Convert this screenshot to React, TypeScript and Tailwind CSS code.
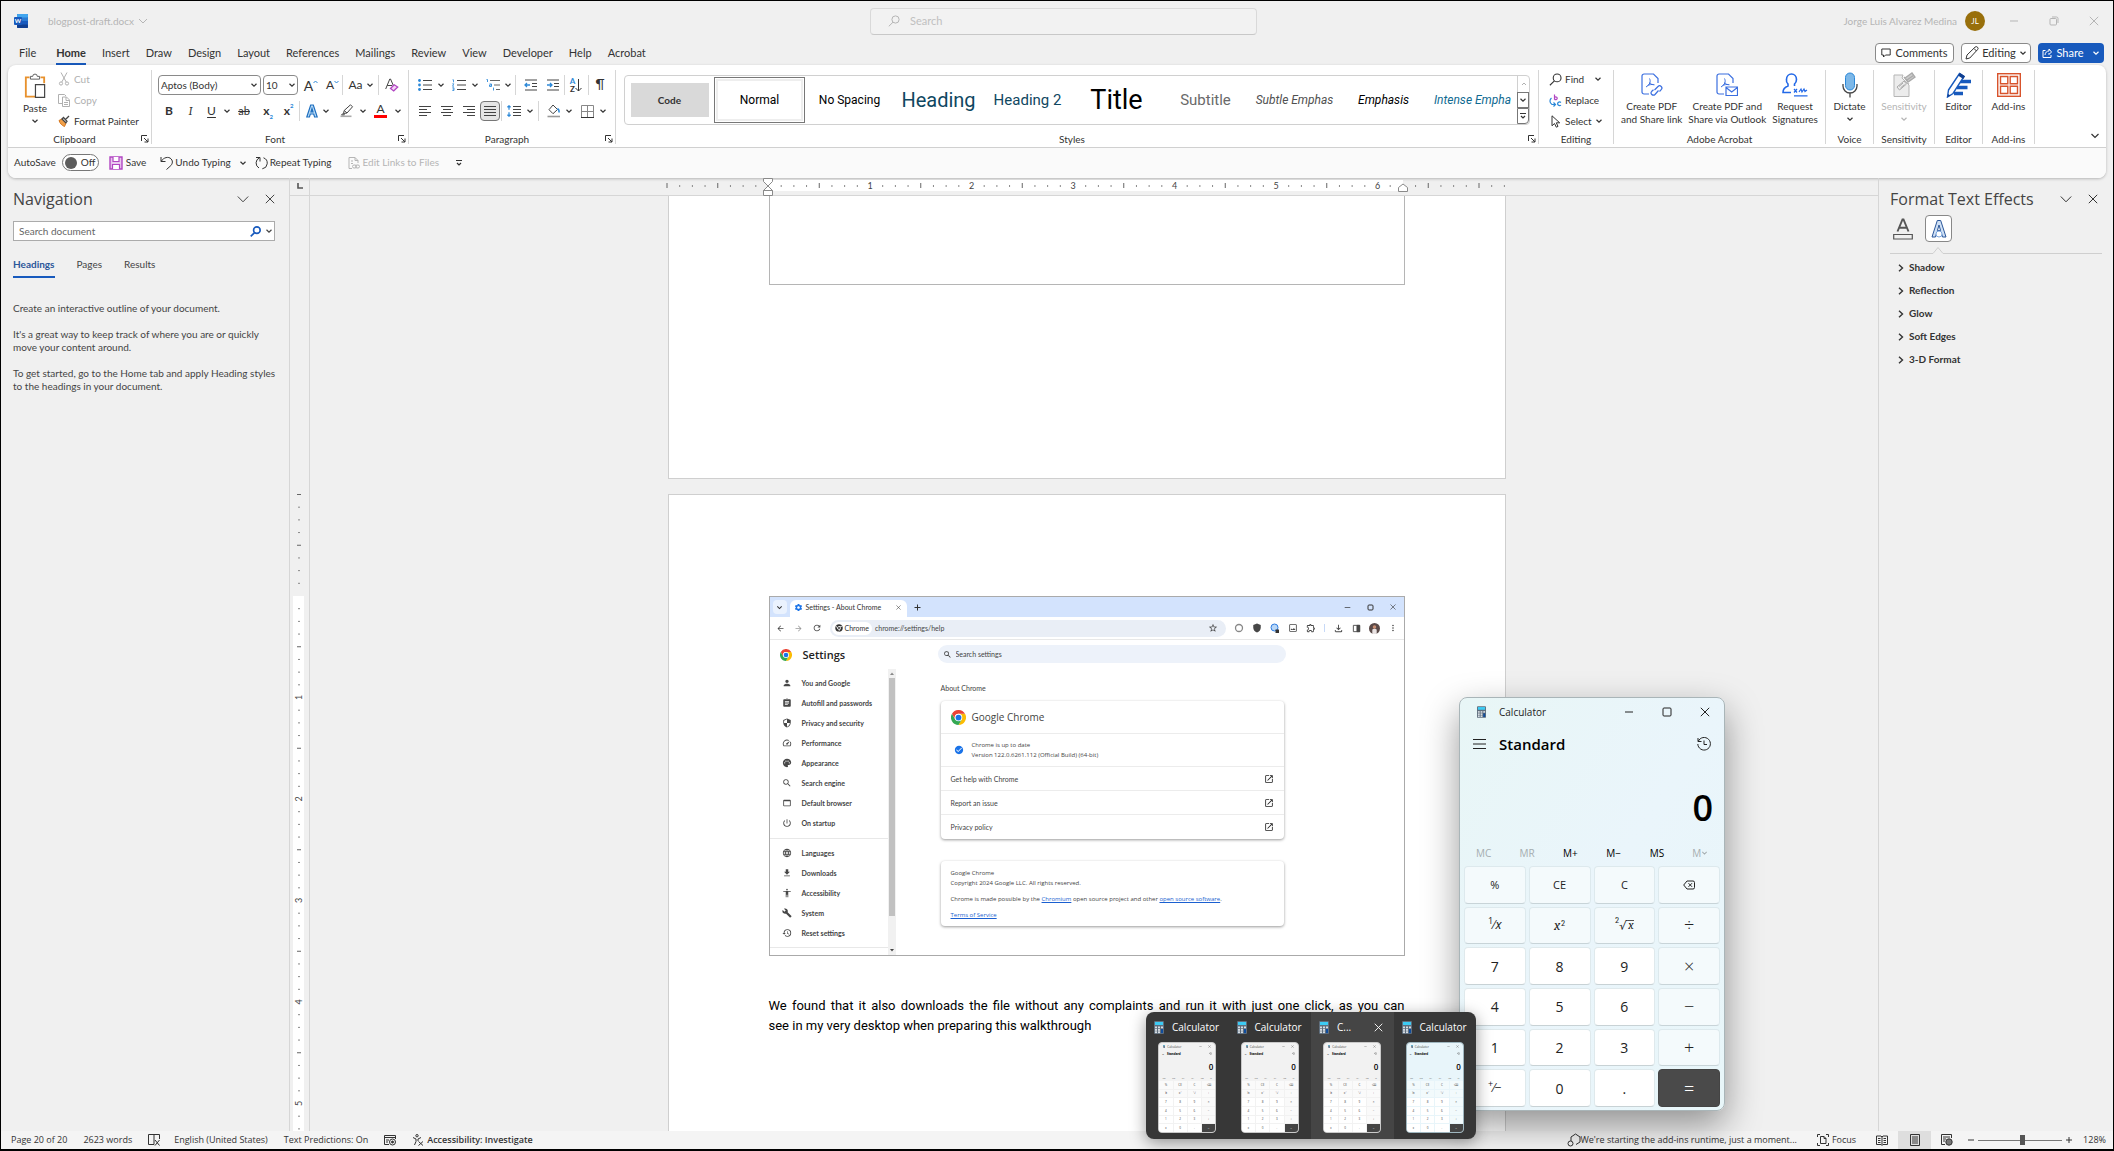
import type { ReactNode } from "react";
import clsx from "clsx";
import {
  MdAccessibility,
  MdArrowBack,
  MdArrowForward,
  MdAssignment,
  MdBuild,
  MdCheckCircle,
  MdFileDownload,
  MdLanguage,
  MdMoreVert,
  MdOpenInNew,
  MdOutlineExtension,
  MdOutlineFileDownload,
  MdOutlineImage,
  MdPalette,
  MdPerson,
  MdPowerSettingsNew,
  MdRefresh,
  MdRestore,
  MdSearch,
  MdSecurity,
  MdSettings,
  MdShield,
  MdSpeed,
  MdStarBorder,
  MdWebAsset,
} from "react-icons/md";

type Kids = { children?: ReactNode; className?: string };

/* ---------- small drawing helpers ---------- */

function Ico({ children, className = "w-4 h-4", box = "0 0 16 16" }: Kids & { box?: string }) {
  return (
    <svg
      viewBox={box}
      className={clsx("shrink-0", className)}
      fill="none"
      stroke="currentColor"
      strokeWidth="1"
      aria-hidden="true"
    >
      {children}
    </svg>
  );
}

function Chevron({ className = "w-2 h-2" }: { className?: string }) {
  return (
    <Ico box="0 0 8 8" className={className}>
      <path d="M1.5 2.8 4 5.2 6.5 2.8" strokeWidth="1.2" />
    </Ico>
  );
}

function WideChevron({ className = "w-3 h-3" }: { className?: string }) {
  return (
    <Ico box="0 0 12 12" className={className}>
      <path d="M.8 3.5 6 8.8l5.200-5.300" />
    </Ico>
  );
}

function Close({ className = "w-[10px] h-[10px]" }: { className?: string }) {
  return (
    <Ico box="0 0 10 10" className={className}>
      <path d="m.8.8 8.400 8.400M9.200.8.8 9.200" />
    </Ico>
  );
}

function Minimize({ className = "w-[10px] h-[10px]" }: { className?: string }) {
  return (
    <Ico box="0 0 10 10" className={className}>
      <path d="M1 5h8" />
    </Ico>
  );
}

function Lens({ className = "w-3 h-3", bold = false }: { className?: string; bold?: boolean }) {
  return (
    <Ico box="0 0 12 12" className={className}>
      <g strokeWidth={bold ? 1.8 : 1}>
        <circle cx="7.500" cy="4.500" r="3.600" />
        <path d="M5 7.200.8 11.300" />
      </g>
    </Ico>
  );
}

function IconBtn({ label, className, children }: Kids & { label: string }) {
  return (
    <button aria-label={label} className={clsx("flex h-5 items-center justify-center", className)}>
      {children}
    </button>
  );
}

function Sep({ className }: { className?: string }) {
  return <span className={clsx("h-5 w-px bg-[#d6d6d6]", className)} />;
}

function CalcIcon({ className = "w-[10px] h-[13px]" }: { className?: string }) {
  return (
    <svg viewBox="0 0 10 13" className={clsx("shrink-0", className)} aria-hidden="true">
      <rect width="10" height="13" rx="1" fill="#5f6e7d" />
      <rect x="1" y="1" width="8" height="3" fill="#3ccbf4" />
      <g fill="#d7dde3">
        <rect x="1" y="5.500" width="2" height="1.800" />
        <rect x="4" y="5.500" width="2" height="1.800" />
        <rect x="7" y="5.500" width="2" height="1.800" />
        <rect x="1" y="8" width="2" height="1.800" />
        <rect x="4" y="8" width="2" height="1.800" />
        <rect x="1" y="10.300" width="2" height="1.800" />
        <rect x="4" y="10.300" width="2" height="1.800" />
      </g>
      <rect x="7" y="8" width="2" height="4.100" fill="#0f4c9c" />
    </svg>
  );
}

function ChromeLogo({ className }: { className?: string }) {
  return (
    <svg viewBox="0 0 24 24" className={clsx("shrink-0", className)} aria-hidden="true">
      <path d="M12 6h10.400A12 12 0 0 1 12 24l5.200-9z" fill="#fbbc04" />
      <path d="M6.800 15 1.600 6A12 12 0 0 0 12 24l5.200-9z" fill="#34a853" />
      <path d="M1.600 6A12 12 0 0 1 22.400 6H12a6 6 0 0 0-5.200 9z" fill="#ea4335" />
      <circle cx="12" cy="12" r="6" fill="#fff" />
      <circle cx="12" cy="12" r="4.600" fill="#1a73e8" />
    </svg>
  );
}

/* ---------- title bar and tabs ---------- */

function TitleBar() {
  return (
    <header className="flex h-[40px] shrink-0 items-center text-[#b5b5b5]">
      <div className="flex flex-1 items-center pl-[13px]">
        <svg viewBox="0 0 14 14" className="h-[14px] w-[14px]" aria-hidden="true">
          <rect x="3" width="11" height="14" rx="1" fill="#185abd" />
          <rect x="3" width="11" height="4" rx="1" fill="#41a5ee" />
          <rect x="3" y="3.500" width="11" height="3.500" fill="#2b7cd3" />
          <rect x="3" y="10.500" width="11" height="3.500" rx="1" fill="#103f91" />
          <rect y="3" width="8" height="8" rx="1" fill="#185abd" />
          <text x="4" y="9.200" fontSize="6" fontWeight="700" fill="#fff" textAnchor="middle">W</text>
        </svg>
        <button className="ml-5 flex items-center gap-1">
          blogpost-draft.docx
          <Ico box="0 0 10 10" className="h-[10px] w-[10px]">
            <path d="M1 3l4 4 4-4" />
          </Ico>
        </button>
      </div>
      <label className="ml-[14px] flex h-[27px] w-[387px] items-center gap-[10px] rounded border border-[#d9d9d9] border-b-[#c8c8c8] bg-[#f2f2f2] px-[17px]">
        <Lens />
        <input
          aria-label="Search"
          placeholder="Search"
          className="flex-1 bg-transparent text-[11px] outline-none placeholder:text-[#c0c0c0]"
        />
      </label>
      <div className="flex flex-1 items-center justify-end pr-[14px]">
        <span>Jorge Luis Alvarez Medina</span>
        <span className="ml-2 flex h-5 w-5 items-center justify-center rounded-full bg-[#986f0b] text-[8px] text-white">
          JL
        </span>
        <button aria-label="Minimize" className="ml-6"><Minimize /></button>
        <button aria-label="Restore" className="ml-[30px]">
          <Ico box="0 0 10 10" className="h-[10px] w-[10px]">
            <rect x="1" y="2.500" width="6.500" height="6.500" rx="1" />
            <path d="M3 1h4.500A1.500 1.500 0 0 1 9 2.500V7" />
          </Ico>
        </button>
        <button aria-label="Close" className="ml-[30px]"><Close /></button>
      </div>
    </header>
  );
}

const tabs = [
  "File", "Home", "Insert", "Draw", "Design", "Layout", "References",
  "Mailings", "Review", "View", "Developer", "Help", "Acrobat",
];

function Tabs() {
  return (
    <div className="flex h-6 shrink-0 items-center justify-between pl-[18px] pr-[9px] text-[11px] text-[#333]">
      <nav className="flex gap-4">
        {tabs.map((tab) => (
          <button
            key={tab}
            className={clsx(
              "h-6 border-b-2 leading-[24px]",
              tab === "File" && "mr-1",
              tab === "Home" ? "border-[#185abd] font-bold" : "border-transparent"
            )}
          >
            {tab}
          </button>
        ))}
      </nav>
      <div className="flex gap-[7px]">
        <button className="flex h-5 w-[79px] items-center justify-center gap-1 rounded border border-[#8a8a8a] bg-white">
          <Ico box="0 0 10 10" className="h-[10px] w-[10px]">
            <path d="M.8 1h8.400v6H4.500L2.500 9V7H.8z" />
          </Ico>
          Comments
        </button>
        <button className="flex h-5 w-[70px] items-center justify-center gap-[3px] rounded border border-[#8a8a8a] bg-white">
          <Ico box="0 0 14 14" className="h-[14px] w-[14px]">
            <path d="m1 13 1-4L10 1.200a1.600 1.600 0 0 1 2.500 2.500L4.800 12zM9 2.500 11.500 5" />
          </Ico>
          Editing
          <Chevron />
        </button>
        <button className="flex h-5 w-[66px] items-center justify-center gap-1 rounded bg-[#185abd] text-white">
          <Ico box="0 0 10 10" className="h-[10px] w-[10px]">
            <path d="M3.500 2.500H1v7h8V7M3 7c.3-2.500 1.700-4 4-4V1l2.500 3L7 6.500V5" />
          </Ico>
          Share
          <Chevron className="ml-1 h-2 w-2" />
        </button>
      </div>
    </div>
  );
}

/* ---------- ribbon ---------- */

function Group({ title, launcher, className, children }: Kids & { title: string; launcher?: boolean }) {
  return (
    <section className={clsx("flex h-[74px] flex-col border-r border-[#d6d6d6]", className)}>
      <div className="h-16">{children}</div>
      <div className="flex h-[10px] items-center">
        <h2 className="flex-1 text-center leading-none">{title}</h2>
        {launcher && (
          <button aria-label={title + " settings"} className="w-[10px]">
            <Ico box="0 0 8 8" className="h-2 w-2">
              <path d="M.5 6V.5H6M3 3l4 4M7 3.500V7H3.500" />
            </Ico>
          </button>
        )}
      </div>
    </section>
  );
}

function ClipboardGroup() {
  return (
    <Group title="Clipboard" launcher className="w-[144px]">
      <div className="flex h-full pl-[7px]">
        <button className="flex w-10 flex-col items-center pt-[3px]">
          <Ico box="0 0 24 28" className="h-[26px] w-[22px]">
            <path d="M6 4.500H2v21h11M18 4.500h4V11" stroke="#e8912d" strokeWidth="2" />
            <path d="M7 6.500v-3h2.500a2.500 2.500 0 0 1 5 0H17v3z" fill="#fff" stroke="#555" />
            <path d="M12.500 12.500h10v14h-10z" fill="#fff" stroke="#444" strokeWidth="1.300" />
          </Ico>
          <span className="mt-[3px] leading-3">Paste</span>
          <Chevron className="mt-[3px] h-2 w-2" />
        </button>
        <div className="flex flex-col gap-[3px] pl-[3px]">
          <button className="flex h-[18px] items-center gap-1 text-[#b0b0b0]">
            <Ico className="h-[14px] w-3" box="0 0 12 14">
              <path d="M3 .5 8.200 10M9 .5 3.800 10" />
              <circle cx="3" cy="11.500" r="1.600" />
              <circle cx="9" cy="11.500" r="1.600" />
            </Ico>
            Cut
          </button>
          <button className="flex h-[18px] items-center gap-1 text-[#b0b0b0]">
            <Ico className="h-[14px] w-3" box="0 0 12 14">
              <path d="M4 10.500H.5v-9h6L8 3M4.500 4h4L11.500 7v6.500h-7zM8 4v3.500h3.500M6 9.500h4M6 11.500h4" />
            </Ico>
            Copy
          </button>
          <button className="flex h-[18px] items-center gap-1">
            <Ico className="h-3 w-3" box="0 0 12 12">
              <path d="M1 5.500 4 4l4 4-1.500 3.500C4 10.500 2 8.500 1 5.500z" fill="#f0a04b" stroke="#d8761a" />
              <path d="m4 4 1.500-1.500L9 6.200 7.800 7.800zM7.500 4.500 11 1" stroke="#444" strokeWidth="1.300" />
            </Ico>
            Format Painter
          </button>
        </div>
      </div>
    </Group>
  );
}

function FontGroup() {
  return (
    <Group title="Font" launcher className="w-[257px]">
      <div className="flex flex-col gap-[6px] pl-[6px] pt-[5px]">
        <div className="flex h-5 items-center">
          <div className="flex h-5 w-[103px] items-center rounded border border-[#8a8a8a] pr-[2px]">
            <select aria-label="Font" className="h-full flex-1 appearance-none pl-[2px] outline-none">
              <option>Aptos (Body)</option>
            </select>
            <Chevron />
          </div>
          <div className="ml-[2px] flex h-5 w-[35px] items-center rounded border border-[#8a8a8a] pr-px">
            <select aria-label="Font size" className="h-full w-5 flex-1 appearance-none pl-[2px] outline-none">
              <option>10</option>
            </select>
            <Chevron />
          </div>
          <IconBtn label="Grow font" className="w-[26px] text-[14px]">
            A
            <Ico box="0 0 5 10" className="h-[10px] w-[5px] text-[#2b88d8]"><path d="M.5 3 2.500 1l2 2" /></Ico>
          </IconBtn>
          <IconBtn label="Shrink font" className="w-[17px] text-[12px]">
            A
            <Ico box="0 0 5 10" className="h-[10px] w-[5px] text-[#2b88d8]"><path d="m.5 1 2 2 2-2" /></Ico>
          </IconBtn>
          <Sep className="mx-px" />
          <IconBtn label="Change case" className="w-[34px] gap-[3px] text-[12px]">
            Aa
            <Chevron />
          </IconBtn>
          <Sep />
          <IconBtn label="Clear formatting" className="ml-px w-6">
            <Ico className="h-[14px] w-[14px]" box="0 0 14 14">
              <path d="M.7 11 4.800 1h.7L9 9M2.200 7.500h5" stroke="#444" />
              <path d="m5.500 10.500 3.700-3.700 3.500 2.200-4 4z" fill="#f4d4f7" stroke="#b146c2" strokeWidth="1.300" />
            </Ico>
          </IconBtn>
        </div>
        <div className="flex h-5 items-center">
          <IconBtn label="Bold" className="w-[22px] text-[12px] font-bold">B</IconBtn>
          <IconBtn label="Italic" className="w-[21px] font-serif text-[12px] italic">I</IconBtn>
          <IconBtn label="Underline" className="w-[21px] text-[12px] underline underline-offset-2">U</IconBtn>
          <IconBtn label="Underline styles" className="w-[9px]"><Chevron /></IconBtn>
          <IconBtn label="Strikethrough" className="w-[26px] text-[11px] line-through">ab</IconBtn>
          <IconBtn label="Subscript" className="w-[22px] text-[12px] font-bold">
            x<span className="self-end text-[6px] text-[#2b88d8]">2</span>
          </IconBtn>
          <IconBtn label="Superscript" className="w-[19px] text-[12px] font-bold">
            x<span className="self-start text-[6px] text-[#2b88d8]">2</span>
          </IconBtn>
          <Sep className="mx-px" />
          <IconBtn label="Text effects" className="w-[21px]">
            <Ico className="h-[14px] w-3" box="0 0 12 14">
              <path d="M.8 13 4.700 1h2.600l3.900 12H8.600l-.9-3H4.300l-.9 3zM5 7.800h2L6 4.500z" fill="#bcdcf5" stroke="#1e6fc0" strokeWidth="1.200" />
            </Ico>
          </IconBtn>
          <IconBtn label="Text effect list" className="mr-1 w-2"><Chevron /></IconBtn>
          <IconBtn label="Highlight" className="w-[25px]">
            <Ico className="h-[14px] w-[14px]" box="0 0 14 14">
              <path d="m3.500 9.500.7-3L10.500.8l2 2L7 9zM4.200 6.500 7 9M3 9.500 1.500 11h3z" stroke="#444" />
              <path d="M.5 12.300h11" stroke="#aaa" strokeWidth="1.600" />
            </Ico>
          </IconBtn>
          <IconBtn label="Highlight colors" className="w-2"><Chevron /></IconBtn>
          <IconBtn label="Font color" className="w-[27px] flex-col">
            <span className="text-[12px] leading-[10px]">A</span>
            <span className="mt-px h-[3px] w-[13px] bg-[#ff0000]" />
          </IconBtn>
          <IconBtn label="Font colors" className="w-2"><Chevron /></IconBtn>
        </div>
      </div>
    </Group>
  );
}

function Lines({ rows }: { rows: [number, number][] }) {
  return (
    <Ico className="h-3 w-3" box="0 0 12 12">
      {rows.map(([x1, x2], i) => (
        <path key={i} d={`M${x1} ${i * 3 + 1.5}H${x2}`} stroke="#444" />
      ))}
    </Ico>
  );
}

function ParagraphGroup() {
  return (
    <Group title="Paragraph" launcher className="w-[207px]">
      <div className="flex flex-col gap-[6px] pl-[5px] pt-[5px]">
        <div className="flex h-5 items-center">
          <IconBtn label="Bullets" className="w-[22px]">
            <Ico className="h-3 w-[14px]" box="0 0 14 12">
              <g fill="#2b88d8" stroke="none">
                <circle cx="1.500" cy="1.500" r="1.400" />
                <circle cx="1.500" cy="6" r="1.400" />
                <circle cx="1.500" cy="10.500" r="1.400" />
              </g>
              <path d="M5 1.500h9M5 6h9M5 10.500h9" stroke="#444" />
            </Ico>
          </IconBtn>
          <IconBtn label="Bullet styles" className="mr-[2px] w-[10px]"><Chevron /></IconBtn>
          <IconBtn label="Numbering" className="w-[22px]">
            <Ico className="h-3 w-[14px]" box="0 0 14 12">
              <path d="M.5.800h1v2.500M.3 4.800h1.500l-1.300 2.400h1.500M.3 8.800h1.700v2.700H.3M.6 10.100h1.400" stroke="#2b88d8" strokeWidth=".8" />
              <path d="M5 1.500h9M5 6h9M5 10.500h9" stroke="#444" />
            </Ico>
          </IconBtn>
          <IconBtn label="Number styles" className="mr-[3px] w-[10px]"><Chevron /></IconBtn>
          <IconBtn label="Multilevel list" className="w-5">
            <Ico className="h-3 w-[14px]" box="0 0 14 12">
              <path d="M.5.500h1v2.500M3.500 5h2v2.500h-2V6h2M7.500 9v2.500M7.500 8v.4" stroke="#2b88d8" strokeWidth=".9" />
              <path d="M4 1.500h10M8 6h6M10 10.500h4" stroke="#666" />
            </Ico>
          </IconBtn>
          <IconBtn label="List styles" className="w-[9px]"><Chevron /></IconBtn>
          <Sep className="mx-[3px]" />
          <IconBtn label="Decrease indent" className="ml-px w-[22px]">
            <Ico className="h-3 w-[14px]" box="0 0 14 12">
              <path d="M1 1h12M8 4.500h5M8 7.500h5M1 11h12" stroke="#444" />
              <path d="M6 6H1M3 4 1 6l2 2" stroke="#2b88d8" strokeWidth="1.300" />
            </Ico>
          </IconBtn>
          <IconBtn label="Increase indent" className="w-[22px]">
            <Ico className="h-3 w-[14px]" box="0 0 14 12">
              <path d="M1 1h12M8 4.500h5M8 7.500h5M1 11h12" stroke="#444" />
              <path d="M1 6h5M4 4l2 2-2 2" stroke="#2b88d8" strokeWidth="1.300" />
            </Ico>
          </IconBtn>
          <Sep />
          <IconBtn label="Sort" className="w-[22px]">
            <span className="flex flex-col text-[8px] font-bold leading-[8px]">
              <span className="text-[#2b88d8]">A</span>
              <span>Z</span>
            </span>
            <Ico box="0 0 7 14" className="h-[14px] w-[7px]">
              <path d="M3.500 1v12M.5 10l3 3 3-3" />
            </Ico>
          </IconBtn>
          <Sep className="mx-px" />
          <IconBtn label="Show marks" className="w-5 text-[13px]">¶</IconBtn>
        </div>
        <div className="flex h-5 items-center">
          <IconBtn label="Align left" className="w-[22px]"><Lines rows={[[0, 12], [0, 8], [0, 12], [0, 8]]} /></IconBtn>
          <IconBtn label="Center" className="w-[22px]"><Lines rows={[[0, 12], [2, 10], [0, 12], [2, 10]]} /></IconBtn>
          <IconBtn label="Align right" className="w-[22px]"><Lines rows={[[0, 12], [4, 12], [0, 12], [4, 12]]} /></IconBtn>
          <IconBtn label="Justify" className="w-5 rounded border border-[#777] bg-[#e6e6e6]">
            <Lines rows={[[0, 12], [0, 12], [0, 12], [0, 12]]} />
          </IconBtn>
          <Sep className="mx-px" />
          <IconBtn label="Line spacing" className="w-[22px]">
            <Ico className="h-3 w-[14px]" box="0 0 14 12">
              <path d="M2 .8v4M.4 2.300 2 .8l1.600 1.500M2 11.200v-4M.4 9.700 2 11.200l1.600-1.500" stroke="#2b88d8" strokeWidth="1.200" />
              <path d="M6 1.500h8M6 4.500h8M6 7.500h8M6 10.500h8" stroke="#444" />
            </Ico>
          </IconBtn>
          <IconBtn label="Spacing options" className="w-[9px]"><Chevron /></IconBtn>
          <Sep className="mx-1" />
          <IconBtn label="Shading" className="w-[22px]">
            <Ico className="h-[14px] w-[14px]" box="0 0 14 14">
              <path d="m6 1 4.500 4.500L6 9.700 2 5.700z" stroke="#444" />
              <path d="M10.500 4.500c1.500 1 1.800 2.500 1.600 4" stroke="#2b88d8" strokeWidth="1.600" />
              <path d="M.5 12.500h12.500" stroke="#999" strokeWidth="1.600" />
            </Ico>
          </IconBtn>
          <IconBtn label="Shading colors" className="mr-1 w-2"><Chevron /></IconBtn>
          <IconBtn label="Borders" className="w-[21px]">
            <Ico className="h-[13px] w-[13px]" box="0 0 13 13">
              <path d="M.5.500h12v12H.5zM6.500.5v12M.5 6.500h12" stroke="#888" />
              <path d="M0 12.500h13" stroke="#333" />
            </Ico>
          </IconBtn>
          <IconBtn label="Border styles" className="w-[10px]"><Chevron /></IconBtn>
        </div>
      </div>
    </Group>
  );
}

const styleNames = [
  { name: "Code", look: "text-[10px] font-['Lato',sans-serif] font-bold" },
  { name: "Normal", look: "text-[12px] text-black" },
  { name: "No Spacing", look: "text-[12px] text-black" },
  { name: "Heading", look: "text-[20px] text-[#0f4761]" },
  { name: "Heading 2", look: "text-[15px] text-[#0f4761]" },
  { name: "Title", look: "text-[27px] text-black" },
  { name: "Subtitle", look: "text-[15px] text-[#6a6a6a]" },
  { name: "Subtle Emphas", look: "text-[12px] italic text-[#505050]" },
  { name: "Emphasis", look: "text-[12px] italic text-black" },
  { name: "Intense Empha", look: "text-[12px] italic text-[#0f6a91]" },
];

function StylesGroup() {
  return (
    <Group title="Styles" launcher className="min-w-0 flex-1">
      <div className="px-2 pt-[5px]">
        <div className="flex h-[50px] rounded border border-[#d0d0d0] font-['Roboto',sans-serif]">
          {styleNames.map((s) => (
            <button
              key={s.name}
              className={clsx(
                "my-px flex min-w-0 flex-1 items-center justify-center whitespace-nowrap",
                s.look,
                s.name === "Normal" && "border border-[#777] outline-2 -outline-offset-4 outline-[#eee]"
              )}
            >
              {s.name === "Code" ? (
                <span className="flex h-[34px] w-[78px] items-center justify-center bg-[#d9d9d9]">Code</span>
              ) : (
                s.name
              )}
            </button>
          ))}
          <div className="flex w-3 flex-col">
            <button aria-label="Previous row" className="flex h-4 items-center justify-center border-l border-[#d0d0d0] text-[#b0b0b0]">
              <Ico box="0 0 8 8" className="h-2 w-2"><path d="M2 5l2-2 2 2" /></Ico>
            </button>
            <button aria-label="Next row" className="flex h-4 items-center justify-center border border-[#777]">
              <Chevron />
            </button>
            <button aria-label="More styles" className="flex h-4 items-center justify-center rounded-br border border-[#777]">
              <Ico box="0 0 8 8" className="h-2 w-2"><path d="M1 1.500h6M2 4l2 2 2-2" strokeWidth="1.200" /></Ico>
            </button>
          </div>
        </div>
      </div>
    </Group>
  );
}

function EditingGroup() {
  return (
    <Group title="Editing" className="w-[75px]">
      <div className="flex flex-col gap-[3px] pl-[10px]">
        <button className="flex h-[18px] items-center gap-[3px]">
          <Lens className="h-[13px] w-[13px]" />
          Find
          <Chevron className="ml-[7px] h-2 w-2" />
        </button>
        <button className="flex h-[18px] items-center gap-[3px]">
          <Ico className="h-[13px] w-[13px]" box="0 0 13 13">
            <path d="M5.500.5v5M5.500 3.500a1.500 1.300 0 1 1 0 1.500" stroke="#b146c2" strokeWidth="1.200" />
            <path d="M12 8.500a2 1.800 0 1 0 0 2.600M2.500 4C.5 5.500.3 9 3 10.500h3M4.500 8.500l2 2-2 2" stroke="#2b88d8" strokeWidth="1.200" />
          </Ico>
          Replace
        </button>
        <button className="flex h-[18px] items-center gap-[3px]">
          <Ico className="h-[13px] w-[13px]" box="0 0 13 13">
            <path d="M3 .8v10L5.500 8.500l1.800 3.700 1.700-.8-1.700-3.600h3.400z" />
          </Ico>
          <span className="whitespace-nowrap">Select</span>
          <Chevron />
        </button>
      </div>
    </Group>
  );
}

function BigBtn({ icon, lines, chevron, className }: { icon: ReactNode; lines: string[]; chevron?: boolean; className?: string }) {
  return (
    <button className={clsx("flex flex-col items-center pt-[2px] leading-[13px]", className)}>
      <span className="mb-[2px] flex h-[26px] items-center">{icon}</span>
      {lines.map((l) => (
        <span key={l} className="whitespace-nowrap">{l}</span>
      ))}
      {chevron && <Chevron className="mt-[2px] h-2 w-2" />}
    </button>
  );
}

function PdfIcon({ children }: Kids) {
  return (
    <Ico className="h-6 w-[22px] text-[#3b6fe0]" box="0 0 22 24">
      <path d="M8 21H3a2 2 0 0 1-2-2V3a2 2 0 0 1 2-2h9.500L17 5.500V10" strokeWidth="1.200" />
      <path d="M8.500 5.500c1.500 3 .5 6-3.500 8.500M8.700 9.500c1 1.700 2.500 2.300 4.800 2.300M6.500 12.500c2-.8 4-1.200 6-1" />
      {children}
    </Ico>
  );
}

function RightGroups() {
  return (
    <>
      <Group title="Adobe Acrobat" className="w-[212px]">
        <div className="flex justify-center gap-[6px]">
          <BigBtn
            lines={["Create PDF", "and Share link"]}
            icon={
              <PdfIcon>
                <path d="m13.500 17 3.500-3.500a2.200 2.200 0 0 1 3.200 3.200L18.500 18.500M17.500 17.500l-3.500 4a2.200 2.200 0 0 1-3.200-3.200l1.700-1.600" strokeWidth="1.200" />
              </PdfIcon>
            }
          />
          <BigBtn
            lines={["Create PDF and", "Share via Outlook"]}
            icon={
              <PdfIcon>
                <path d="M10 14h11.500v8.500H10zM10 14.500l5.700 4.500 5.700-4.500" fill="#fff" strokeWidth="1.200" />
              </PdfIcon>
            }
          />
          <BigBtn
            lines={["Request", "Signatures"]}
            icon={
              <Ico className="h-6 w-[26px] text-[#2369e8]" box="0 0 26 24">
                <path d="M9 19.500H1c0-3.500 2-5.500 5-6.500V11a5 5 0 0 1-1.500-4.500C4.500 3 6.800 1 9.500 1s5 2 5 5.500A6 6 0 0 1 12.500 11v2" strokeWidth="1.600" />
                <path d="m12 16 3 3.500M15 16l-3 3.500M17 19l2-3 1 3 2-3 1 2.500 2-1.500M12 22.800h13.500" strokeWidth="1.200" />
              </Ico>
            }
          />
        </div>
      </Group>
      <Group title="Voice" className="w-12">
        <BigBtn
          className="w-full"
          lines={["Dictate"]}
          chevron
          icon={
            <Ico className="h-[26px] w-4" box="0 0 16 26">
              <rect x="3.500" y="1" width="9" height="17" rx="4.500" fill="#7db8e8" stroke="#2b88d8" />
              <path d="M1 12v2a7 7 0 0 0 14 0v-2M8 21v4.500" stroke="#444" strokeWidth="1.300" />
            </Ico>
          }
        />
      </Group>
      <Group title="Sensitivity" className="w-[61px]">
        <div className="text-[#b5b5b5]">
          <BigBtn
            className="w-full"
            lines={["Sensitivity"]}
            chevron
            icon={
              <Ico className="h-[26px] w-6" box="0 0 24 26">
                <path d="M2 3h9l-1 3 7 7v11.500H2z" fill="#ececec" stroke="#b5b5b5" />
                <path d="m5 15 7-6 2.500 3-7 6zM7 14.500l4-3.500M8.500 16l4-3.500" stroke="#aaa" />
                <path d="m13 6 7-5 3 4-7 5zM12 5l5 6.500M15 8l6-4.300" fill="#ccc" stroke="#aaa" strokeWidth="1.300" />
              </Ico>
            }
          />
        </div>
      </Group>
      <Group title="Editor" className="w-12">
        <BigBtn
          className="w-full"
          lines={["Editor"]}
          icon={
            <Ico className="h-[26px] w-[26px]" box="0 0 26 26">
              <path d="M13 9.500h12M11 15.500h10.500M8 21.500h9" stroke="#185abd" strokeWidth="3.600" />
              <path d="M2.500 18 13.500 1.500l4.500 3L7 21.500l-5.500 3.500z" fill="#fff" stroke="#185abd" strokeWidth="1.400" />
              <path d="M12 3.500 14 1l5 3.200-1.700 2.800zM1.500 25l.5-3 2.500 1.500z" fill="#103f91" stroke="none" />
            </Ico>
          }
        />
      </Group>
      <Group title="Add-ins" className="w-[52px]">
        <BigBtn
          className="w-full"
          lines={["Add-ins"]}
          icon={
            <Ico className="h-6 w-6 text-[#d8532c]" box="0 0 24 24">
              <rect x=".7" y=".7" width="22.600" height="22.600" strokeWidth="1.400" />
              <path d="M3.500 3.500h7.300v7.300H3.500zM13.200 3.500h7.300v7.300h-7.300zM3.500 13.200h7.300v7.300H3.500zM13.200 13.200h7.300v7.300h-7.300z" strokeWidth="1.400" />
            </Ico>
          }
        />
      </Group>
      <button aria-label="Collapse ribbon" className="mb-[3px] flex w-[71px] items-end justify-end pr-[6px]">
        <Ico box="0 0 10 10" className="h-[10px] w-[10px]"><path d="m1.500 3 3.500 3.500L8.500 3" strokeWidth="1.200" /></Ico>
      </button>
    </>
  );
}

function QuickAccess() {
  return (
    <div className="flex h-[31px] items-center rounded-b-lg border-t border-[#d0d0d0] bg-[#fafafa] pb-px pl-[6px]">
      <label className="flex items-center gap-[6px]">
        AutoSave
        <span className="flex h-[17px] w-[37px] items-center rounded-full border border-[#777] bg-white px-[2px]">
          <input type="checkbox" className="h-[12px] w-[12px] appearance-none rounded-full bg-[#5c5c5c]" />
          <span className="ml-1">Off</span>
        </span>
      </label>
      <button className="ml-[10px] flex items-center gap-[3px]">
        <Ico className="h-[14px] w-[14px] text-[#b146c2]" box="0 0 14 14">
          <path d="M1 1h12v12H1z" fill="#e9c7ee" strokeWidth="1.400" />
          <path d="M4 1v4.500h6V1M3.500 13V8.500h7V13" fill="#fff" strokeWidth="1.200" />
        </Ico>
        Save
      </button>
      <button className="ml-[14px] flex items-center gap-[2px]">
        <Ico className="h-[14px] w-[13px]" box="0 0 13 14">
          <path d="M1 1v4.500h4.500M1.200 5.300C3.500 1.500 8.500 0 11.200 3c2.200 2.600 1 5.500-1 7.200L6.500 13.500" />
        </Ico>
        Undo Typing
      </button>
      <button aria-label="Undo history" className="ml-2"><Chevron /></button>
      <button className="ml-2 flex items-center gap-[2px]">
        <Ico className="h-[14px] w-[13px]" box="0 0 13 14">
          <path d="M4.500 1.800A5.700 5.700 0 0 0 4 12M1 1.500h4v4M8.500 1.800a5.700 5.700 0 0 1-1.200 11" />
        </Ico>
        Repeat Typing
      </button>
      <button className="ml-4 flex items-center gap-[3px] text-[#b5b5b5]">
        <Ico className="h-[14px] w-3" box="0 0 12 14">
          <path d="M4 12.500H1v-11h6L10 4.500V7M7 1.500v3h3M3 5h2M3 7.500h2" />
          <rect x="4.500" y="9" width="4" height="3" rx="1.500" />
          <rect x="7.500" y="9" width="4" height="3" rx="1.500" />
        </Ico>
        Edit Links to Files
      </button>
      <button aria-label="Customize toolbar" className="ml-4">
        <Ico box="0 0 8 8" className="h-2 w-2"><path d="M1 1.500h6M2 4l2 2 2-2" strokeWidth="1.200" /></Ico>
      </button>
    </div>
  );
}

/* ---------- side panes ---------- */

function PaneHeader({ title }: { title: string }) {
  return (
    <div className="flex h-6 items-center">
      <h2 className="flex-1 whitespace-nowrap font-['Open_Sans',sans-serif] text-[16px] text-[#444]">{title}</h2>
      <button aria-label={title + " options"}><WideChevron /></button>
      <button aria-label={"Close " + title} className="ml-4"><Close /></button>
    </div>
  );
}

function NavigationPane() {
  return (
    <aside className="w-[289px] shrink-0 border-r border-[#d6d6d6] pl-3 pr-2 pt-[9px] text-[#444]">
      <div className="pr-[6px]">
        <PaneHeader title="Navigation" />
        <label className="mt-[10px] flex h-5 items-center border border-[#ababab] bg-white px-[5px]">
          <input
            aria-label="Search document"
            placeholder="Search document"
            className="flex-1 outline-none placeholder:text-[#666]"
          />
          <Lens bold className="h-[11px] w-[11px] text-[#185abd]" />
          <Chevron className="ml-1 -mr-1 h-2 w-2" />
        </label>
      </div>
      <div className="mt-3 flex gap-[22px]">
        <button className="h-[25px] border-b-2 border-[#185abd] font-bold text-[#2b579a]">Headings</button>
        <button className="h-[25px] border-b-2 border-transparent">Pages</button>
        <button className="h-[25px] border-b-2 border-transparent">Results</button>
      </div>
      <div className="mt-6 flex flex-col gap-[13px] leading-[13px]">
        <p>Create an interactive outline of your document.</p>
        <p>It's a great way to keep track of where you are or quickly move your content around.</p>
        <p>To get started, go to the Home tab and apply Heading styles to the headings in your document.</p>
      </div>
    </aside>
  );
}

const effects = ["Shadow", "Reflection", "Glow", "Soft Edges", "3-D Format"];

function FormatPane() {
  return (
    <aside className="w-[235px] shrink-0 border-l border-[#d6d6d6] pl-[11px] pr-[11px] pt-[9px] text-[#333]">
      <div className="pr-1">
        <PaneHeader title="Format Text Effects" />
      </div>
      <div className="mt-1 flex items-center">
        <button aria-label="Text fill" className="flex w-[26px] justify-center">
          <Ico className="h-[22px] w-5 text-[#555]" box="0 0 20 22">
            <path d="M4.500 13.500 9.500 1.500h1l5 12M6.300 9.700h7.400" strokeWidth="1.900" />
            <path d="M.7 16.500h18.600V21H.7z" strokeWidth="1.200" />
          </Ico>
        </button>
        <button aria-label="Text effects" className="ml-[9px] flex h-[27px] w-[27px] items-center justify-center rounded border border-[#888] bg-white">
          <Ico className="h-5 w-4 text-[#2b579a]" box="0 0 16 20">
            <path d="M1 18 6.300 1.500h3.400L15 18h-3.500l-1-3.500h-5l-1 3.500zM6.400 11.500h3.200L8 6z" fill="#cfe0f5" />
            <circle cx="8" cy="15" r="3" fill="#fff" stroke="#7aa5dd" />
          </Ico>
        </button>
      </div>
      <Ico className="mt-1 h-2 w-full text-[#cfcfcf]" box="0 0 212 8">
        <path d="M0 7.500h43l5-6 5 6h159" />
      </Ico>
      <ul className="mt-[2px] pl-2">
        {effects.map((e) => (
          <li key={e}>
            <button className="flex h-[23px] items-center gap-[5px] font-bold">
              <Ico box="0 0 6 8" className="h-2 w-[6px]"><path d="m1 .8 3.500 3.200L1 7.200" strokeWidth="1.400" /></Ico>
              {e}
            </button>
          </li>
        ))}
      </ul>
    </aside>
  );
}

/* ---------- rulers ---------- */

const STEP = 101.5 / 8; // an eighth of an inch

function HorizontalRuler() {
  const marks = Array.from({ length: 67 }, (_, i) => i - 8);
  return (
    <svg width="838" height="18" className="overflow-visible" aria-hidden="true">
      <rect x="101" y="2" width="634" height="11" fill="#fff" />
      {marks.map((n) => {
        const x = 100.5 + n * STEP;
        if (n === 0 || n === 50) return null;
        if (n > 0 && n % 8 === 0 && n < 56)
          return <text key={n} x={x} y="10.500" fontSize="9" textAnchor="middle" fill="#444">{n / 8}</text>;
        return n % 4 === 0
          ? <path key={n} d={`M${x} 5v5`} stroke="#666" />
          : <path key={n} d={`M${x} 7v2`} stroke="#888" />;
      })}
      <g fill="#fff" stroke="#8a8a8a">
        <path d="M95.500.500h9v3L100 8l-4.500-4.500zM100 8l4.500 4.500h-9zM95.500 12.500h9v5h-9z" />
        <path d="m735 6 4.500 3.500v4h-9v-4z" />
      </g>
    </svg>
  );
}

function VerticalRuler() {
  const marks = Array.from({ length: 51 }, (_, i) => i - 8);
  return (
    <div className="flex w-5 shrink-0 flex-col border-r border-[#d6d6d6]">
      <div className="h-[18px] border-b border-[#d6d6d6] pl-[7px] pt-[5px]">
        <Ico box="0 0 6 6" className="h-[6px] w-[6px]"><path d="M1 0v5h5" strokeWidth="1.600" stroke="#555" /></Ico>
      </div>
      <div className="min-h-0 flex-1 overflow-hidden">
        <svg width="19" height="940" aria-hidden="true">
          <rect x="3" y="400" width="11" height="540" fill="#fff" />
          {marks.map((n) => {
            const y = 400 + n * STEP;
            if (n === 0) return null;
            if (n > 0 && n % 8 === 0)
              return (
                <text key={n} transform={`translate(12 ${y}) rotate(-90)`} fontSize="9" textAnchor="middle" fill="#444">
                  {n / 8}
                </text>
              );
            return n % 4 === 0
              ? <path key={n} d={`M7 ${y}h4`} stroke="#666" />
              : <path key={n} d={`M8 ${y}h2`} stroke="#888" />;
          })}
        </svg>
      </div>
    </div>
  );
}

/* ---------- browser window shown in the document ---------- */

const settingsMenu = [
  { icon: MdPerson, text: "You and Google" },
  { icon: MdAssignment, text: "Autofill and passwords" },
  { icon: MdSecurity, text: "Privacy and security" },
  { icon: MdSpeed, text: "Performance" },
  { icon: MdPalette, text: "Appearance" },
  { icon: MdSearch, text: "Search engine" },
  { icon: MdWebAsset, text: "Default browser" },
  { icon: MdPowerSettingsNew, text: "On startup" },
];

const settingsMenuMore = [
  { icon: MdLanguage, text: "Languages" },
  { icon: MdFileDownload, text: "Downloads" },
  { icon: MdAccessibility, text: "Accessibility" },
  { icon: MdBuild, text: "System" },
  { icon: MdRestore, text: "Reset settings" },
];

function MenuItem({ item }: { item: (typeof settingsMenu)[number] }) {
  const Icon = item.icon;
  return (
    <a href="#" className="flex h-5 items-center gap-[10px] pl-3 font-bold text-[#444]">
      <Icon className="h-[10px] w-[10px] text-[#474747]" />
      {item.text}
    </a>
  );
}

function BrowserShot() {
  return (
    <div className="flex h-[360px] flex-col overflow-hidden border border-[#aaa] bg-white text-[7px] leading-[10px] text-[#444]">
      <div className="flex h-5 shrink-0 items-center bg-[#d3e3fd] pr-2 text-[#333]">
        <span className="ml-[3px] flex h-[14px] w-[14px] items-center justify-center rounded bg-[#eaf2fe]"><Chevron className="h-[7px] w-[7px]" /></span>
        <div className="ml-[3px] flex h-[17px] w-[117px] items-center self-end rounded-t-md bg-white px-1 pb-[3px]">
          <MdSettings className="h-[9px] w-[9px] text-[#1a73e8]" />
          <span className="ml-[3px] flex-1">Settings - About Chrome</span>
          <Close className="mr-[2px] h-[5px] w-[5px]" />
        </div>
        <Ico box="0 0 7 7" className="ml-[7px] h-[7px] w-[7px]"><path d="M3.500.5v6M.5 3.500h6" /></Ico>
        <div className="ml-auto flex items-center gap-4">
          <Minimize className="h-[7px] w-[7px]" />
          <Ico box="0 0 7 7" className="h-[7px] w-[7px]"><rect x="1" y="1" width="5" height="5" rx="1" /></Ico>
          <Close className="h-[6px] w-[6px]" />
        </div>
      </div>
      <div className="flex h-[23px] shrink-0 items-center border-b border-[#e8e8e8] pl-[6px] pr-[6px] text-[#474747]">
        <MdArrowBack className="h-[9px] w-[9px]" />
        <MdArrowForward className="ml-[9px] h-[9px] w-[9px] text-[#999]" />
        <MdRefresh className="ml-[9px] h-[10px] w-[10px]" />
        <div className="ml-2 flex h-[17px] flex-1 items-center rounded-full bg-[#e9eef6] pl-[2px] pr-2">
          <span className="flex h-[13px] items-center gap-[2px] rounded-full bg-white px-[3px] text-[#333]">
            <Ico box="0 0 16 16" className="h-2 w-2">
              <circle cx="8" cy="8" r="7" fill="#333" />
              <circle cx="8" cy="8" r="3" stroke="#fff" strokeWidth="1.500" />
              <path d="M8 5h6.500M5.500 9.500 2.300 4M10.500 9.500 7.300 15" stroke="#fff" strokeWidth="1.300" />
            </Ico>
            Chrome
          </span>
          <span className="ml-[3px] flex-1">chrome://settings/help</span>
          <MdStarBorder className="h-[10px] w-[10px]" />
        </div>
        <div className="ml-2 flex items-center gap-2">
          <Ico box="0 0 10 10" className="h-[10px] w-[10px] text-[#888]"><circle cx="5" cy="5" r="3.500" strokeWidth="1.300" /></Ico>
          <MdShield className="h-[10px] w-[10px]" />
          <Ico box="0 0 10 10" className="h-[10px] w-[10px]">
            <circle cx="4.500" cy="4.500" r="3.500" fill="#b9d7f7" stroke="#2f7de1" />
            <path d="M5.500 6.500h3.500V10H5.500z" fill="#333" stroke="none" />
          </Ico>
          <MdOutlineImage className="h-[10px] w-[10px]" />
          <MdOutlineExtension className="h-[10px] w-[10px]" />
          <span className="h-2 w-px bg-[#c7d9f7]" />
          <MdOutlineFileDownload className="h-[11px] w-[11px]" />
          <Ico box="0 0 10 10" className="h-[9px] w-[9px]">
            <path d="M1.500 1.500h7v7h-7z" />
            <path d="M5.500 1.500h3v7h-3z" fill="currentColor" />
          </Ico>
          <Ico box="0 0 10 10" className="h-[11px] w-[11px]">
            <circle cx="5" cy="5" r="5" fill="#5a4a48" stroke="none" />
            <path d="M3 10V6l2-1 2 1v4z" fill="#e9e3e3" stroke="none" />
            <circle cx="5" cy="3.700" r="1.600" fill="#c98f74" stroke="none" />
          </Ico>
          <MdMoreVert className="h-[10px] w-[10px]" />
        </div>
      </div>
      <div className="flex min-h-0 flex-1">
        <div className="flex w-[126px] shrink-0 flex-col">
          <div className="flex h-[29px] shrink-0 items-center pl-[10px]">
            <ChromeLogo className="h-3 w-3" />
            <span className="ml-[11px] font-['Open_Sans',sans-serif] text-[11px] font-semibold text-[#222]">Settings</span>
          </div>
          <div className="flex min-h-0 flex-1">
            <div className="flex-1 pt-1">
              {settingsMenu.map((m) => <MenuItem key={m.text} item={m} />)}
              <div className="mb-1 mt-[5px] border-t border-[#e8e8e8]" />
              {settingsMenuMore.map((m) => <MenuItem key={m.text} item={m} />)}
              <div className="my-1 border-t border-[#e8e8e8]" />
            </div>
            <div className="flex w-2 flex-col items-center bg-[#f1f1f1]">
              <Ico box="0 0 8 8" className="h-[9px] w-2 text-[#888]"><path d="M2 5.500h4l-2-2.500z" fill="currentColor" stroke="none" /></Ico>
              <div className="w-[6px] flex-1 bg-[#c1c1c1]" />
              <div className="h-[30px]" />
              <Ico box="0 0 8 8" className="h-[9px] w-2"><path d="M2 2.500h4L4 5z" fill="currentColor" stroke="none" /></Ico>
            </div>
          </div>
        </div>
        <div className="flex-1 pl-[42px] pt-[5px]">
          <label className="flex h-[18px] w-[348px] items-center gap-1 rounded-full bg-[#edf2fa] px-[5px]">
            <MdSearch className="h-[9px] w-[9px] text-[#333]" />
            <input aria-label="Search settings" placeholder="Search settings" className="flex-1 bg-transparent outline-none placeholder:text-[#444]" />
          </label>
          <h3 className="ml-[3px] mt-5">About Chrome</h3>
          <div className="ml-[3px] mt-2 w-[343px] divide-y divide-[#ececec] rounded bg-white shadow-[0_1px_3px_rgba(0,0,0,0.4)]">
            <div className="flex h-[33px] items-center gap-[6px] pl-[10px] font-['Open_Sans',sans-serif] text-[10px]">
              <ChromeLogo className="h-[15px] w-[15px]" />
              Google Chrome
            </div>
            <div className="flex h-[33px] items-center gap-[8px] pl-[13px] font-['Open_Sans',sans-serif] text-[6px]">
              <MdCheckCircle className="h-[10px] w-[10px] text-[#1a73e8]" />
              <p>
                Chrome is up to date
                <br />
                Version 122.0.6261.112 (Official Build) (64-bit)
              </p>
            </div>
            {["Get help with Chrome", "Report an issue", "Privacy policy"].map((t) => (
              <a key={t} href="#" className="flex h-6 items-center justify-between pl-[10px] pr-[10px]">
                {t}
                <MdOpenInNew className="h-[10px] w-[10px] text-[#222]" />
              </a>
            ))}
          </div>
          <div className="ml-[3px] mt-[22px] h-[65px] w-[343px] rounded bg-white pl-[10px] pt-[7px] font-['Open_Sans',sans-serif] text-[6px] shadow-[0_1px_3px_rgba(0,0,0,0.4)]">
            <p>
              Google Chrome
              <br />
              Copyright 2024 Google LLC. All rights reserved.
            </p>
            <p className="mt-[6px]">
              Chrome is made possible by the <a href="#" className="text-[#1a5fd0] underline">Chromium</a> open source
              project and other <a href="#" className="text-[#1a5fd0] underline">open source software</a>.
            </p>
            <p className="mt-[6px]"><a href="#" className="text-[#1a5fd0] underline">Terms of Service</a></p>
          </div>
        </div>
      </div>
    </div>
  );
}

function DocumentArea() {
  return (
    <main className="flex min-w-0 flex-1 flex-col">
      <div className="flex h-[18px] shrink-0 justify-center border-b border-[#d6d6d6] pr-[15px]">
        <HorizontalRuler />
      </div>
      <div className="flex min-h-0 flex-1 flex-col items-center overflow-hidden pr-[15px]">
        <div className="h-[283px] w-[838px] shrink-0 border border-t-0 border-[#cfcfcf] bg-white px-[100px]">
          <div className="h-[89px] border border-t-0 border-[#b5b5b5]" />
        </div>
        <div className="mt-[15px] w-[838px] shrink-0 border border-[#cfcfcf] bg-white px-[100px] pb-[200px] pt-[101px]">
          <BrowserShot />
          <p className="mt-10 font-['Roboto',sans-serif] text-[13px] leading-5 text-black">
            <span className="block [text-align-last:justify]">
              We found that it also downloads the file without any complaints and run it with just one click, as you can
            </span>
            see in my very desktop when preparing this walkthrough
          </p>
        </div>
      </div>
    </main>
  );
}

/* ---------- status bar ---------- */

function StatusBar() {
  return (
    <footer className="flex h-[18px] shrink-0 items-center bg-[#f4f4f4] pl-[10px] pr-[7px] font-['Open_Sans',sans-serif] text-[9px]">
      <span>Page 20 of 20</span>
      <span className="ml-4">2623 words</span>
      <Ico className="ml-4 h-3 w-3" box="0 0 12 12">
        <path d="M6 10.500H.5v-10H6v10M6 .5h5.500V5M7 6l4.500 5.500M11.500 6 7 11.500" />
      </Ico>
      <span className="ml-[14px]">English (United States)</span>
      <span className="ml-4">Text Predictions: On</span>
      <Ico className="ml-4 h-3 w-3" box="0 0 12 12">
        <path d="M5 10.500H.5v-9h11V5M.5 3.500h11M2 6h3M2 8h2" />
        <circle cx="8.500" cy="8" r="3" />
        <circle cx="8.500" cy="8" r="1" fill="currentColor" />
      </Ico>
      <button className="ml-4 flex items-center gap-[3px] font-semibold">
        <Ico className="h-3 w-3" box="0 0 12 12">
          <circle cx="5" cy="1.700" r="1.200" />
          <path d="M1 3.500 4 5v2.500L2.500 11M9 3.500 6 5v2M6.500 7.500l4.500 4M11 7.500l-4.500 4" />
        </Ico>
        Accessibility: Investigate
      </button>
      <span className="ml-auto flex items-center">
        <Ico className="h-[14px] w-[14px]" box="0 0 14 14">
          <path d="M4 8V4l4.500-3L13 4v5l-4 2.500" />
          <circle cx="3.500" cy="10.500" r="2.500" />
        </Ico>
        We're starting the add-ins runtime, just a moment...
      </span>
      <button className="ml-5 flex items-center gap-[3px]">
        <Ico className="h-3 w-3" box="0 0 12 12">
          <path d="M.5 3V.5H3M9 .5h2.500V3M11.500 9v2.500H9M3 11.500H.5V9M3.500 2.500H7L9 4.500v5H3.500zM7 2.500v2h2" />
        </Ico>
        Focus
      </button>
      <button aria-label="Read mode" className="ml-5">
        <Ico className="h-[11px] w-3" box="0 0 12 11">
          <path d="M.5 1h4.500l1 1 1-1h4.500v8.500H7l-1 1-1-1H.5zM6 2v8M2 3.500h2.500M2 5.500h2.500M2 7.500h2.500M7.500 3.500H10M7.500 5.500H10M7.500 7.500H10" />
        </Ico>
      </button>
      <button aria-label="Print layout" className="ml-[10px] flex h-[18px] w-[33px] items-center justify-center bg-[#dedede]">
        <Ico className="h-3 w-[10px]" box="0 0 10 12">
          <path d="M.5.500h9v11h-9zM2 3h6M2 5h6M2 7h6M2 9h6" />
        </Ico>
      </button>
      <button aria-label="Web layout" className="ml-[10px]">
        <Ico className="h-3 w-3" box="0 0 12 12">
          <path d="M4 10.500H.5v-10h10V4M2 3h7M2 5h3M2 7h2" />
          <circle cx="8" cy="8" r="3.200" fill="#777" />
        </Ico>
      </button>
      <button aria-label="Zoom out" className="ml-[14px]">
        <Ico box="0 0 8 8" className="h-2 w-2"><path d="M1 4h6" /></Ico>
      </button>
      <input
        type="range"
        aria-label="Zoom"
        defaultValue={53}
        className="mx-[3px] h-3 w-[84px] appearance-none bg-[linear-gradient(#777,#777)] bg-[length:100%_1px] bg-center bg-no-repeat [&::-webkit-slider-thumb]:h-[10px] [&::-webkit-slider-thumb]:w-[5px] [&::-webkit-slider-thumb]:appearance-none [&::-webkit-slider-thumb]:bg-[#555]"
      />
      <button aria-label="Zoom in">
        <Ico box="0 0 8 8" className="h-2 w-2"><path d="M1 4h6M4 1v6" /></Ico>
      </button>
      <span className="ml-[10px]">128%</span>
    </footer>
  );
}

/* ---------- calculator ---------- */

function Frac({ top, bottom }: { top: string; bottom: string }) {
  return (
    <span className="flex items-center text-[12px]">
      <sup className="text-[9px]">{top}</sup>⁄{bottom}
    </span>
  );
}

const keys: { id: string; face: ReactNode; kind: "fn" | "num" | "eq" }[] = [
  { id: "%", face: "%", kind: "fn" },
  { id: "CE", face: "CE", kind: "fn" },
  { id: "C", face: "C", kind: "fn" },
  {
    id: "Backspace",
    kind: "fn",
    face: (
      <Ico className="h-[10px] w-3" box="0 0 12 10">
        <path d="M4 1h6a1.500 1.500 0 0 1 1.500 1.500v5A1.500 1.500 0 0 1 10 9H4L.7 5zM5.500 3.200l3.500 3.600M9 3.200 5.500 6.800" />
      </Ico>
    ),
  },
  { id: "1/x", face: <Frac top="1" bottom="𝑥" />, kind: "fn" },
  { id: "x2", face: <span className="font-serif text-[14px] italic">x<sup className="ml-px text-[8px] not-italic">2</sup></span>, kind: "fn" },
  {
    id: "Root",
    kind: "fn",
    face: (
      <span className="flex items-center font-serif text-[12px] italic">
        <sup className="text-[8px] not-italic">2</sup>√<span className="border-t border-[#555] leading-[9px]">x</span>
      </span>
    ),
  },
  { id: "÷", face: "÷", kind: "fn" },
  { id: "7", face: "7", kind: "num" },
  { id: "8", face: "8", kind: "num" },
  { id: "9", face: "9", kind: "num" },
  { id: "×", face: "×", kind: "fn" },
  { id: "4", face: "4", kind: "num" },
  { id: "5", face: "5", kind: "num" },
  { id: "6", face: "6", kind: "num" },
  { id: "−", face: "−", kind: "fn" },
  { id: "1", face: "1", kind: "num" },
  { id: "2", face: "2", kind: "num" },
  { id: "3", face: "3", kind: "num" },
  { id: "+", face: "+", kind: "fn" },
  { id: "+/-", face: <Frac top="+" bottom="−" />, kind: "num" },
  { id: "0", face: "0", kind: "num" },
  { id: ".", face: ".", kind: "num" },
  { id: "=", face: "=", kind: "eq" },
];

const wideSigns = ["÷", "×", "−", "+", "="];
const memory = ["MC", "MR", "M+", "M−", "MS", "M"];

function Calculator() {
  return (
    <div className="absolute bottom-[38px] right-[388px] flex h-[414px] w-[266px] flex-col overflow-hidden rounded-lg border border-[#a9b5b8] bg-linear-to-br from-[#e8f6f6] via-[#eaf5fb] to-[#e8f6f9] font-['Open_Sans',sans-serif] text-[#222] shadow-[0_14px_36px_rgba(0,0,0,0.4)]">
      <div className="flex h-7 shrink-0 items-center pl-[17px] pr-[14px] text-[10px]">
        <CalcIcon className="h-3 w-[9px]" />
        <span className="ml-[13px] flex-1">Calculator</span>
        <button aria-label="Minimize calculator"><Minimize /></button>
        <button aria-label="Maximize calculator" className="ml-7">
          <Ico box="0 0 10 10" className="h-[10px] w-[10px]"><rect x="1" y="1" width="8" height="8" rx="1" /></Ico>
        </button>
        <button aria-label="Close calculator" className="ml-7"><Close /></button>
      </div>
      <div className="flex h-9 shrink-0 items-center pl-[13px] pr-[13px]">
        <button aria-label="Menu">
          <Ico box="0 0 13 10" className="h-[10px] w-[13px]"><path d="M0 .5h13M0 5h13M0 9.500h13" /></Ico>
        </button>
        <h2 className="ml-[13px] flex-1 text-[15px] font-semibold text-black">Standard</h2>
        <button aria-label="History">
          <Ico box="0 0 14 14" className="h-[14px] w-[14px]">
            <path d="M1 1v3.500h3.500M1.300 4.300A6.300 6.300 0 1 1 .8 7M7 3.500V7.500h3" />
          </Ico>
        </button>
      </div>
      <div className="flex h-20 shrink-0 items-center justify-end pr-[11px] pt-3 text-[36px] font-semibold text-black">0</div>
      <div className="flex h-[22px] shrink-0 items-center justify-around px-[2px] text-[10px]">
        {memory.map((m) => (
          <button
            key={m}
            className={clsx("flex w-8 items-center justify-center", ["MC", "MR", "M"].includes(m) ? "text-[#a5adb0]" : "text-black")}
          >
            {m}
            {m === "M" && <Chevron className="h-2 w-[7px]" />}
          </button>
        ))}
      </div>
      <div className="grid min-h-0 flex-1 grid-cols-4 grid-rows-6 gap-[3px] px-1 pb-[3px] pt-[2px]">
        {keys.map((k) => (
          <button
            key={k.id}
            aria-label={k.id}
            className={clsx(
              "flex min-h-0 items-center justify-center rounded border",
              k.kind === "num" && "border-[#dfe9ec] border-b-[#c8d2d5] bg-white text-[14px]",
              k.kind === "fn" && "border-[#dde9ed] border-b-[#c8d4d8] bg-[#f4fafc]",
              k.kind === "eq" && "border-[#444] bg-[#4a4a4a] text-white",
              k.kind !== "num" && (wideSigns.includes(k.id) ? "text-[18px] font-light" : "text-[11px]")
            )}
          >
            {k.face}
          </button>
        ))}
      </div>
    </div>
  );
}

/* ---------- taskbar previews ---------- */

const thumbKeys = ["%", "CE", "C", "⌫", "⅟x", "x²", "²√", "÷", "7", "8", "9", "×", "4", "5", "6", "−", "1", "2", "3", "+", "±", "0", ".", "="];

function Thumb({ tinted }: { tinted?: boolean }) {
  return (
    <div
      className={clsx(
        "flex h-[91px] w-[58px] flex-col overflow-hidden rounded-sm border text-[3px] leading-[4px] text-[#444]",
        tinted ? "border-[#9fb6bf] bg-[#e8f5fa]" : "border-[#c9c9c9] bg-[#f2f2f2]"
      )}
    >
      <div className="flex h-[7px] items-center gap-[2px] px-1">
        <CalcIcon className="h-[3px] w-[2px]" />
        <span className="flex-1">Calculator</span>
        <Minimize className="h-[3px] w-[3px]" />
        <Close className="ml-1 h-[3px] w-[3px]" />
      </div>
      <div className="flex h-[7px] items-center gap-[3px] px-[3px]">
        <span>≡</span>
        <span className="flex-1 font-bold text-black">Standard</span>
        <MdRestore className="h-[3px] w-[3px]" />
      </div>
      <div className="flex h-5 items-center justify-end pr-[2px] text-[8px] font-semibold text-black">0</div>
      <div className="flex h-1 items-center justify-around text-[2px]">
        {memory.map((m) => <span key={m}>{m}</span>)}
      </div>
      <div className="grid min-h-0 flex-1 grid-cols-4 grid-rows-6 gap-px">
        {thumbKeys.map((k, i) => (
          <span
            key={k}
            className={clsx(
              "flex items-center justify-center",
              k === "=" ? "bg-[#444] text-white" : i < 8 || i % 4 === 3 ? (tinted ? "bg-[#f2fafc]" : "bg-[#fafafa]") : "bg-white"
            )}
          >
            {k}
          </span>
        ))}
      </div>
    </div>
  );
}

function TaskPreviews() {
  return (
    <div className="absolute bottom-[10px] right-[637px] flex h-[127px] w-[330px] overflow-hidden rounded-lg bg-[#373737] font-['Open_Sans',sans-serif] text-[10px] text-white shadow-[0_4px_16px_rgba(0,0,0,0.4)]">
      {[0, 1, 2, 3].map((i) => (
        <div key={i} className={clsx("flex w-1/4 flex-col items-center", i === 2 && "bg-[#454545]")}>
          <div className="flex h-[30px] w-full shrink-0 items-center pl-2 pr-[11px]">
            <CalcIcon />
            <span className="ml-2 flex-1">{i === 2 ? "C..." : "Calculator"}</span>
            {i === 2 && <button aria-label="Close preview"><Close className="h-[9px] w-[9px]" /></button>}
          </div>
          <Thumb tinted={i === 3} />
        </div>
      ))}
    </div>
  );
}

export default function App() {
  return (
    <div className="relative flex h-screen flex-col overflow-hidden border border-b-2 border-black bg-[#f0f0f0] font-['Lato',sans-serif] text-[10px] text-[#333]">
      <TitleBar />
      <Tabs />
      <div className="mx-[7px] shrink-0 rounded-lg bg-white shadow-[0_1px_3px_rgba(0,0,0,0.25)]">
        <div className="flex pb-[3px] pt-[5px]">
          <ClipboardGroup />
          <FontGroup />
          <ParagraphGroup />
          <StylesGroup />
          <EditingGroup />
          <RightGroups />
        </div>
        <QuickAccess />
      </div>
      <div className="flex min-h-0 flex-1">
        <NavigationPane />
        <VerticalRuler />
        <DocumentArea />
        <FormatPane />
      </div>
      <StatusBar />
      <Calculator />
      <TaskPreviews />
    </div>
  );
}
